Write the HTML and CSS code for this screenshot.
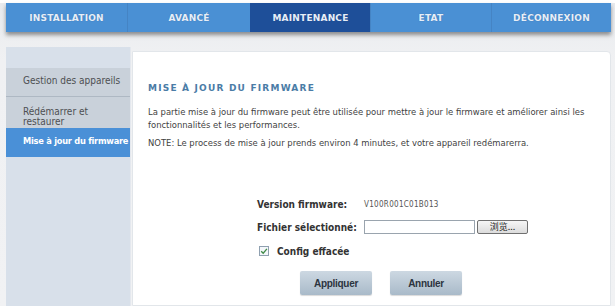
FILE: index.html
```html
<!DOCTYPE html>
<html lang="fr">
<head>
<meta charset="utf-8">
<title>Mise à jour du firmware</title>
<link rel="stylesheet" href="styles.css">
</head>
<body>
<div class="page">
  <nav class="tabs">
    <a class="tab">INSTALLATION</a>
    <a class="tab">AVANCÉ</a>
    <a class="tab active">MAINTENANCE</a>
    <a class="tab">ETAT</a>
    <a class="tab">DÉCONNEXION</a>
  </nav>
  <div class="main">
    <aside class="side">
      <a class="item">Gestion des appareils</a>
      <a class="item two">Rédémarrer et restaurer</a>
      <a class="item current">Mise à jour du firmware</a>
    </aside>
    <section class="panel">
      <h1 class="title">MISE À JOUR DU FIRMWARE</h1>
      <p class="desc">La partie mise à jour du firmware peut être utilisée pour mettre à jour le firmware et améliorer ainsi les fonctionnalités et les performances.</p>
      <p class="desc note">NOTE: Le process de mise à jour prends environ 4 minutes, et votre appareil redémarerra.</p>
      <div class="form">
        <div class="row">
          <span class="label">Version firmware:</span>
          <span class="value">V100R001C01B013</span>
        </div>
        <div class="row">
          <span class="label">Fichier sélectionné:</span>
          <span class="file"><span class="field"></span><span class="browse">浏览...</span></span>
        </div>
        <label class="check"><span class="box"><svg viewBox="0 0 10 10" width="10" height="10"><path d="M2.2 5.2 L4.2 7.2 L7.9 2.8" fill="none" stroke="#3f8a46" stroke-width="1.3"/></svg></span>Config effacée</label>
        <div class="buttons">
          <span class="btn">Appliquer</span>
          <span class="btn">Annuler</span>
        </div>
      </div>
    </section>
  </div>
</div>
</body>
</html>
```

FILE: styles.css
```css
html, body {
  margin: 0;
  padding: 0;
}
body {
  background: #ffffff;
  font-family: "DejaVu Sans Condensed", "DejaVu Sans", sans-serif;
  width: 615px;
  height: 306px;
  overflow: hidden;
}
.page {
  padding: 3px 4px 0 6px;
  background: linear-gradient(#ffffff 0, #ffffff 3px, #e9ebee 3px, #f0f1f3 60px, #f1f2f4 100%);
  height: 306px;
  box-sizing: border-box;
}
.tabs {
  display: grid;
  grid-template-columns: 121px 123px 120px 121px 120px;
  height: 29px;
  background: #4a90d4;
  box-shadow: 0 3px 4px rgba(60, 60, 60, 0.55);
  position: relative;
}
.tab {
  display: flex;
  align-items: center;
  justify-content: center;
  font-family: "DejaVu Sans", sans-serif;
  font-weight: bold;
  font-size: 9px;
  color: #e6eef8;
  letter-spacing: 0.2px;
  border-left: 1px solid #4584c4;
  text-shadow: 0 0 1px rgba(20, 50, 100, 0.4);
}
.tab:first-child {
  border-left: none;
}
.tab.active {
  background: #1e4f99;
  border-left-color: #1e4f99;
}
.main {
  display: flex;
  margin-top: 15px;
  align-items: flex-start;
}
.side {
  width: 125px;
  flex: none;
  height: 259px;
  box-sizing: border-box;
  background: #d8e0ea;
  padding-top: 21px;
  display: flex;
  flex-direction: column;
  border-right: 1px solid #e4e8ee;
}
.item {
  display: block;
  box-sizing: border-box;
  height: 29px;
  background: #c9d1da;
  color: #4d4f52;
  font-size: 10px;
  line-height: 10px;
  padding: 8px 4px 0 17px;
  border-bottom: 1px solid #aeb8c3;
}
.item.two {
  height: 31px;
  padding-top: 10px;
  border-bottom: none;
}
.item.current {
  background: #4a90d7;
  color: #ffffff;
  font-weight: bold;
  font-size: 9.2px;
  padding-right: 0;
  border-bottom: none;
  white-space: nowrap;
  letter-spacing: -0.25px;
}
.panel {
  flex: 1;
  margin-left: 1px;
  margin-top: 4px;
  height: 255px;
  background: #ffffff;
  border: 1px solid #e2e6ea;
  border-radius: 0 4px 0 0;
  padding: 31px 0 0 15px;
  box-sizing: border-box;
}
.title {
  margin: 0;
  font-family: "DejaVu Sans", sans-serif;
  font-size: 9px;
  font-weight: bold;
  color: #4a7ca6;
  letter-spacing: 1.2px;
  line-height: 11px;
}
.desc {
  margin: 11px 0 0 0;
  font-size: 9.4px;
  line-height: 13px;
  color: #3f3f3f;
  width: 450px;
}
.desc.note {
  margin-top: 5px;
}
.form {
  margin: 48px 0 0 109px;
  display: flex;
  flex-direction: column;
}
.row {
  display: flex;
  align-items: center;
  height: 14px;
  margin-bottom: 9px;
}
.label {
  width: 107px;
  font-size: 10px;
  font-weight: bold;
  color: #333333;
}
.value {
  font-size: 8px;
  color: #555555;
  letter-spacing: 0.3px;
}
.file {
  display: flex;
  align-items: center;
}
.field {
  width: 109px;
  height: 12px;
  border: 1px solid #9aa4ae;
  background: #ffffff;
}
.browse {
  margin-left: 2px;
  width: 49px;
  height: 12px;
  border: 1px solid #707070;
  border-radius: 2px;
  background: linear-gradient(#f6f6f6, #dcdcdc);
  font-family: "Noto Sans CJK SC", sans-serif;
  font-size: 9px;
  line-height: 12px;
  color: #222;
  text-align: center;
}
.check {
  display: flex;
  align-items: center;
  margin: 1px 0 0 2px;
  font-size: 10px;
  font-weight: bold;
  color: #333333;
  height: 14px;
}
.box {
  width: 10px;
  height: 10px;
  box-sizing: border-box;
  border: 1px solid #8fa0b0;
  background: #f4f7fa;
  margin-right: 8px;
  display: flex;
}
.box svg {
  margin: -1px;
}
.buttons {
  display: flex;
  gap: 18px;
  margin: 13px 0 0 43px;
}
.btn {
  width: 72px;
  height: 24px;
  display: flex;
  align-items: center;
  justify-content: center;
  background: linear-gradient(#cdd8e2, #a9bac9);
  border-radius: 2px;
  font-family: "Liberation Sans", sans-serif;
  font-size: 10px;
  font-weight: bold;
  letter-spacing: -0.3px;
  color: #2c3440;
  box-shadow: 0 1px 1px rgba(0,0,0,0.15);
}
```
